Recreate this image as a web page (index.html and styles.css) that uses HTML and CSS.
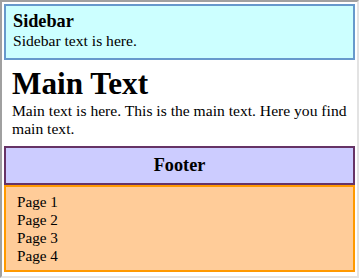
FILE: index.html
```html
<!DOCTYPE html>
<html lang="en">
<head>
  <meta charset="UTF-8">
  <title>Layout</title>
  <link rel="stylesheet" href="styles.css">
</head>
<body>
  <div class="frame">
    <div class="sidebar">
      <h3>Sidebar</h3>
      <p>Sidebar text is here.</p>
    </div>
    <div class="main">
      <h1>Main Text</h1>
      <p>Main text is here. This is the main text. Here you find main text.</p>
    </div>
    <div class="footer">Footer</div>
    <ul class="nav">
      <li>Page 1</li>
      <li>Page 2</li>
      <li>Page 3</li>
      <li>Page 4</li>
    </ul>
  </div>
</body>
</html>
```
FILE: styles.css
```css
html, body {
  margin: 0;
  height: 100%;
  background-color: #fff;
}

/* inset window frame */
.frame {
  box-sizing: border-box;
  height: 100%;
  padding: 2px;
  border: 2px solid;
  border-color: #a0a0a0 #e3e3e3 #e3e3e3 #a0a0a0;
  font-family: "Liberation Serif", serif;
  font-size: 15.6px;
  color: #000;
}

.sidebar {
  background-color: #ccffff;
  border: 2px solid #6699cc;
  padding: 5px 7px 8px;
}

.sidebar h3 {
  margin: 0;
  font-size: 1.17em;
}

.sidebar p {
  margin: 0;
}

.main {
  padding: 6px 0 8px 8px;
}

.main h1 {
  margin: 0;
  font-size: 2em;
}

.main p {
  margin: 0;
}

.footer {
  background-color: #ccccff;
  border: 2px solid #663366;
  text-align: center;
  font-weight: bold;
  font-size: 1.17em;
  padding: 7px 0;
}

.nav {
  list-style: none;
  margin: 0;
  padding: 6px 11px 5px;
  font-size: 15.2px;
  background-color: #ffcc99;
  border: 2px solid #ff9900;
}
```
